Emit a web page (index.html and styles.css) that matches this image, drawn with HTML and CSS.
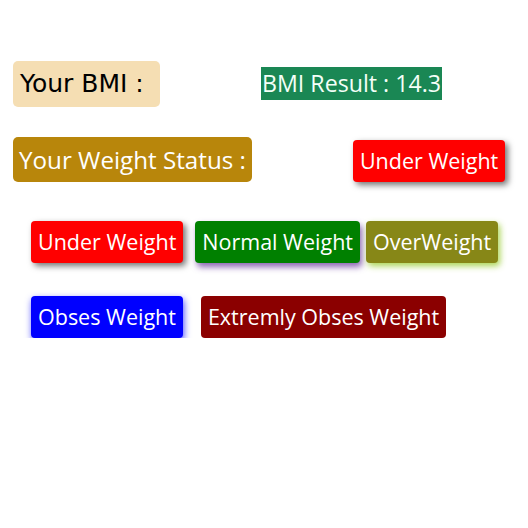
FILE: index.html
```html
<!DOCTYPE html>
<html>
<head>
<meta charset="utf-8">
<link rel="stylesheet" href="styles.css">
</head>
<body>
<div class="page">
  <div class="row row-top">
    <div class="bmi-label">Your BMI :</div>
    <div class="bmi-result">BMI Result : 14.3</div>
  </div>
  <div class="row row-status">
    <div class="status-label">Your Weight Status :</div>
    <div class="btn btn-under status-value">Under Weight</div>
  </div>
  <div class="row row-legend1">
    <div class="btn btn-under">Under Weight</div>
    <div class="btn btn-normal">Normal Weight</div>
    <div class="btn btn-over">OverWeight</div>
  </div>
  <div class="row row-legend2">
    <div class="btn btn-obses">Obses Weight</div>
    <div class="btn btn-extreme">Extremly Obses Weight</div>
  </div>
</div>
</body>
</html>
```
FILE: styles.css
```css
html, body {
  margin: 0;
  padding: 0;
  background: #ffffff;
}
body {
  font-family: "Open Sans", "Noto Sans", sans-serif;
  color: #ffffff;
}
.page {
  padding-top: 61px;
}
.row {
  display: flex;
  align-items: flex-start;
}
.row-top {
  padding-left: 13px;
}
.bmi-label {
  background: #f5deb3;
  color: #000000;
  font-family: "DejaVu Sans", sans-serif;
  font-size: 25px;
  line-height: 30px;
  padding: 8px 7px 8px 7px;
  border-radius: 5px;
  width: 133px;
  white-space: nowrap;
}
.bmi-result {
  margin-left: 101px;
  margin-top: 6px;
  background: #1a8754;
  color: #f4fff8;
  font-size: 23.2px;
  line-height: 33px;
  padding: 0 1px;
  white-space: nowrap;
}
.row-status {
  padding-left: 13px;
  margin-top: 30px;
}
.status-label {
  background: #b8860b;
  font-size: 24.2px;
  line-height: 31px;
  padding: 7px 6px;
  border-radius: 5px;
  white-space: nowrap;
}
.btn {
  font-size: 21.5px;
  line-height: 28px;
  padding: 7px 7px;
  border-radius: 4px;
  white-space: nowrap;
}
.status-value {
  margin-left: 101px;
  margin-top: 3px;
}
.btn-under {
  background: #ff0000;
  box-shadow: 3px 3px 6px rgba(0, 0, 0, 0.55);
}
.btn-normal {
  background: #008000;
  box-shadow: 2px 4px 6px rgba(102, 51, 153, 0.75);
}
.btn-over {
  background: #878717;
  box-shadow: 2px 3px 6px rgba(154, 205, 50, 0.85);
}
.btn-obses {
  background: #0000ff;
  box-shadow: 1px 3px 7px rgba(0, 0, 255, 0.7);
}
.btn-extreme {
  background: #8b0000;
}
.row-legend1 {
  padding-left: 31px;
  margin-top: 39px;
  gap: 12px;
}
.row-legend1 .btn-over {
  margin-left: -6px;
}
.row-legend2 {
  padding-left: 31px;
  margin-top: 33px;
  gap: 18px;
}
```
